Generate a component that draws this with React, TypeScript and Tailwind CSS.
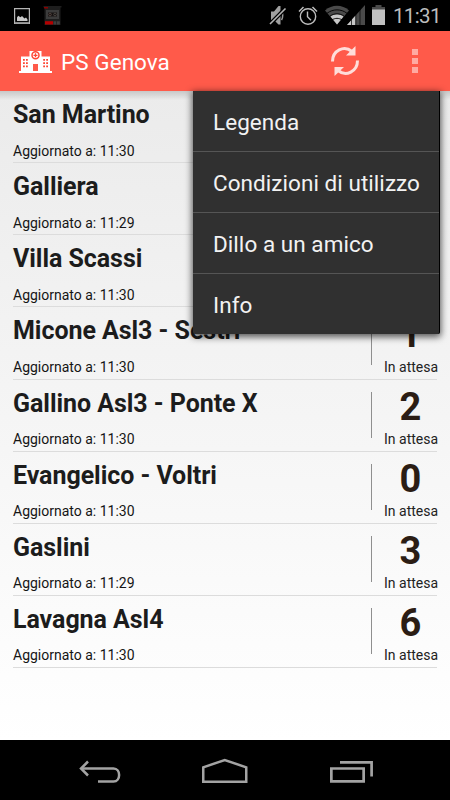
type Hospital = {
  name: string;
  updatedAt: string;
  waiting: number;
};

const hospitals: Hospital[] = [
  { name: 'San Martino', updatedAt: '11:30', waiting: 4 },
  { name: 'Galliera', updatedAt: '11:29', waiting: 5 },
  { name: 'Villa Scassi', updatedAt: '11:30', waiting: 2 },
  { name: 'Micone Asl3 - Sestri', updatedAt: '11:30', waiting: 1 },
  { name: 'Gallino Asl3 - Ponte X', updatedAt: '11:30', waiting: 2 },
  { name: 'Evangelico - Voltri', updatedAt: '11:30', waiting: 0 },
  { name: 'Gaslini', updatedAt: '11:29', waiting: 3 },
  { name: 'Lavagna Asl4', updatedAt: '11:30', waiting: 6 },
];

const menuItems = ['Legenda', 'Condizioni di utilizzo', 'Dillo a un amico', 'Info'];

function StatusBar() {
  return (
    <div className="flex h-[31px] shrink-0 items-start bg-black text-[#bdbdbd]">
      <svg className="ml-[14px] mt-2 h-4 w-4 shrink-0" viewBox="0 0 16 16" fill="none">
        <path d="M.6.6h14.8v14.8H.6z" stroke="#b5b5b5" strokeWidth="1.200" />
        <path d="M1 14.700h14" stroke="#8c8c8c" strokeWidth="1.500" />
        <path d="M3 13V9.500l1.200-1.700 2.300 1.400L8 8l2.500 2.500L12 9.500l1.500 2V13z" fill="#c8c8c8" />
      </svg>
      <svg className="ml-[13px] mt-[6px] h-5 w-5 shrink-0" viewBox="0 0 20 20">
        <path d="M.5 0h18v1.500h-18zM1.500 1.500h16V19h-16z" fill="#1e1e1e" />
        <path d="M1 1h4v1.500H1z" fill="#8a0000" />
        <path d="M3 4h13v9H3z" fill="#3c3c3c" />
        <path d="M5 6.500h9v4H5z" fill="#171313" />
        <circle cx="7" cy="8.500" r="1.300" fill="none" stroke="#5c4c48" strokeWidth=".8" />
        <circle cx="12" cy="8.500" r="1.300" fill="none" stroke="#524c48" strokeWidth=".8" />
        <path d="M2 15.200h8v3.300H2z" fill="#b40000" />
        <path d="M10.500 15.200h2.800v3.300h-2.800zM14 15.200h2.800v3.300H14z" fill="#3e3e3e" />
      </svg>
      <svg className="ml-[206px] mt-[5px] h-[21px] w-[18px] shrink-0" viewBox="0 0 18 21">
        <path d="M2 6.500h3L9.500 1h2v18.500h-2L5 15H2z" fill="#a0a0a0" />
        <path d="M12.500 6c1.600 2.200 1.600 6.500 0 9" fill="none" stroke="#999" strokeWidth="1.500" />
        <path d="M1 19 17 3" stroke="#000" strokeWidth="4" />
        <path d="M1 19 16.500 3.500" stroke="#b5b5b5" strokeWidth="1.600" />
      </svg>
      <svg className="ml-[11px] mt-[5px] h-[21px] w-5 shrink-0" viewBox="0 0 20 21" fill="none" stroke="#bdbdbd">
        <circle cx="10" cy="11.500" r="7.700" strokeWidth="1.400" />
        <path d="M9.500 6.500v5.200l3.500 3.500" strokeWidth="1.400" />
        <path d="M1 6.500 5.500 2M14.500 2 19 6.500" strokeWidth="1.500" />
      </svg>
      <svg className="ml-[7px] mt-[5px] h-5 w-6 shrink-0" viewBox="0 0 24 20">
        <path d="M0 5.500C7-.7 17-.7 24 5.500L12 19.500z" fill="#4a4a4a" />
        <path d="M5.500 11.500C9 8.500 15 8.500 18.500 11.500L12 19.500z" fill="#c8c8c8" />
        <path d="M2 8.300c6-4.600 14-4.600 20 0M4.500 11.500c4.500-3.600 10.500-3.600 15 0M7 15c3-2.200 7-2.200 10 0" fill="none" stroke="#000" strokeWidth=".9" />
      </svg>
      <svg className="-ml-[2px] mt-[5px] h-5 w-[18px] shrink-0" viewBox="0 0 18 20">
        <path d="M0 20 18 0v20z" fill="#4a4a4a" />
        <path d="M0 20 8.500 10.500v9.500z" fill="#c8c8c8" />
        <path d="M4.500 12v8M8.800 7v13M13 3v17" stroke="#000" strokeWidth=".7" />
      </svg>
      <svg className="ml-[7px] mt-[5px] h-5 w-[13px] shrink-0" viewBox="0 0 13 20">
        <path d="M3.500 0h6v2H13v3H0V2h3.500z" fill="#4a4a4a" />
        <path d="M0 4.500h13V20H0z" fill="#c0c0c0" />
      </svg>
      <span className="ml-[8px] mt-[3px] whitespace-nowrap text-[20.5px] leading-[26px] tracking-[-0.65px]">11:31</span>
    </div>
  );
}

function HospitalLogo() {
  return (
    <svg className="mt-[2px] h-[22px] w-[33px]" viewBox="0 0 33 22">
      <path d="M0 20h2V5.500h8.500V0h12v5.500H31V20h2v2H0z" fill="#fff" />
      <circle cx="16.500" cy="4.300" r="3.500" fill="#fff" stroke="#ff4534" strokeWidth="1.500" />
      <path d="M16.500 2.300v4M14.500 4.300h4" stroke="#ff4534" strokeWidth="1.300" />
      <path d="M14 13h5v7h-5z" fill="#ff5a4a" />
      <path
        d="M4 8h1.800v1.800H4zM7 8h1.800v1.800H7zM4 11.200h1.800V13H4zM7 11.200h1.800V13H7zM4 14.400h1.800v1.800H4zM7 14.400h1.800v1.800H7zM24.200 8H26v1.800h-1.800zM27.200 8H29v1.800h-1.800zM24.200 11.200H26V13h-1.800zM27.200 11.200H29V13h-1.800zM24.200 14.400H26v1.800h-1.800zM27.200 14.400H29v1.800h-1.800z"
        fill="#ff4534"
      />
    </svg>
  );
}

function ActionBar() {
  return (
    <header className="flex h-[60px] shrink-0 items-center bg-[#ff5a4a] pl-[19px] text-white">
      <HospitalLogo />
      <h1 className="ml-[9px] whitespace-nowrap pt-px text-[22.5px] leading-7 tracking-[0.05px]">PS Genova</h1>
      <svg className="ml-auto h-[30px] w-[28px]" viewBox="0 0 28 30" fill="none">
        <path d="M1.500 15.500C1.500 4.500 13-1 21 5.500" stroke="#ffddd9" strokeWidth="3" />
        <path d="M24.500 0V9.500H15z" fill="#ffddd9" />
        <path d="M26.500 14.500C26.500 25.500 15 31 7 24.500" stroke="#ffddd9" strokeWidth="3" />
        <path d="M3.500 30v-9H13z" fill="#ffddd9" />
      </svg>
      <div className="ml-[53px] mr-[32px] flex flex-col gap-[3px]">
        <span className="h-[6px] w-[6px] bg-[#ffaaa2]" />
        <span className="h-[6px] w-[6px] bg-[#ffaaa2]" />
        <span className="h-[6px] w-[6px] bg-[#ffaaa2]" />
      </div>
    </header>
  );
}

function HospitalRow({ hospital }: { hospital: Hospital }) {
  return (
    <li className="flex h-[72.14px] border-b border-[#dcdcdc]">
      <div className="flex-1 pt-[9px]">
        <h2 className="whitespace-nowrap text-[25px] font-bold leading-[30px] tracking-[-0.05px] text-[#1c1c1c]">
          {hospital.name}
        </h2>
        <p className="mt-[12.6px] text-[14px] leading-4 text-[#151515]">Aggiornato a: {hospital.updatedAt}</p>
      </div>
      <div className="mt-3 h-[46px] w-px bg-[#8f8f8f]" />
      <div className="flex w-[65px] flex-col pt-[5px]">
        <span className="ml-[12px] w-[53px] text-center text-[38px] font-bold leading-[44px] text-[#2b1d14]">
          {hospital.waiting}
        </span>
        <span className="ml-[12px] mt-[2.6px] whitespace-nowrap text-[14px] leading-4 text-[#222]">In attesa</span>
      </div>
    </li>
  );
}

function OverflowMenu() {
  return (
    <div className="absolute left-[193px] top-0 w-[247px] rounded-b-[2px] border-r border-black bg-[#303030] shadow-[0_2px_7px_1px_rgba(0,0,0,0.65)]">
      {menuItems.map((item) => (
        <div
          key={item}
          className="flex h-[61px] items-start whitespace-nowrap border-b border-[#555] pl-[20px] pt-[17px] text-[22.5px] leading-[29px] tracking-[0.05px] text-[#f2f2f2] last:h-[60px] last:border-b-0"
        >
          {item}
        </div>
      ))}
    </div>
  );
}

function NavigationBar() {
  return (
    <nav className="flex h-[60px] shrink-0 items-start bg-black">
      <svg className="ml-[79px] mt-5 h-6 w-[43px]" viewBox="0 0 43 24" fill="none" stroke="#a3a3a3" strokeWidth="2.500">
        <path d="M2 8.500h32.500c7.500 0 7.500 13 0 13H19" />
        <path d="M9 1.500 2 8.500l7 7" />
      </svg>
      <svg className="ml-[80px] mt-[18px] h-[26px] w-[46px]" viewBox="0 0 46 26" fill="none" stroke="#a3a3a3" strokeWidth="2.500">
        <path d="M1.250 23.700V9.300L22.750 2l21.500 7.300v14.400z" />
      </svg>
      <svg className="ml-[82px] mt-5 h-6 w-[44px]" viewBox="0 0 44 24" fill="none" stroke="#a3a3a3" strokeWidth="2.700">
        <path d="M1.350 8.500h32.300v12.800H1.350z" />
        <path d="M10 2.300h31.600v14.200" />
      </svg>
    </nav>
  );
}

export default function App() {
  return (
    <div className="flex h-[800px] w-[450px] flex-col overflow-hidden font-['Roboto',sans-serif]">
      <StatusBar />
      <ActionBar />
      <main className="relative flex-1 bg-linear-to-b from-[#ebebeb] to-white">
        <div className="absolute inset-x-0 top-0 h-[9px] bg-linear-to-b from-black/15 to-transparent" />
        <ul className="px-[13px]">
          {hospitals.map((hospital) => (
            <HospitalRow key={hospital.name} hospital={hospital} />
          ))}
        </ul>
        <OverflowMenu />
      </main>
      <NavigationBar />
    </div>
  );
}
